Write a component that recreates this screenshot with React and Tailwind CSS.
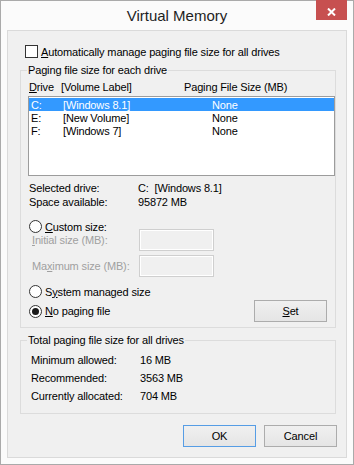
import React from 'react';

const Radio = ({ checked }) => (
  <span className="w-[13px] h-[13px] rounded-full border border-[#333333] bg-white flex items-center justify-center shrink-0">
    {checked && <span className="w-[7px] h-[7px] rounded-full bg-[#1a1a1a]" />}
  </span>
);

const Btn = ({ children, focused }) => (
  <button
    className={`w-[73px] h-[22px] border bg-linear-to-b from-[#f0f0f0] to-[#e5e5e5] flex items-center justify-center ${
      focused ? 'border-[#569de5]' : 'border-[#acacac]'
    }`}
  >
    {children}
  </button>
);

const SizeBox = () => (
  <div className="w-[75px] h-[22px] border border-[#cfcfcf]">
    <div className="w-full h-full border border-white bg-[#f0f0f0]" />
  </div>
);

const drives = [
  { letter: 'C:', label: '[Windows 8.1]', size: 'None', selected: true },
  { letter: 'E:', label: '[New Volume]', size: 'None' },
  { letter: 'F:', label: '[Windows 7]', size: 'None' },
];

const totals = [
  ['Minimum allowed:', '16 MB'],
  ['Recommended:', '3563 MB'],
  ['Currently allocated:', '704 MB'],
];

export default function App() {
  return (
    <div className="relative w-[354px] h-[465px] border border-[#aaaaaa] bg-[#fbfbfb] flex flex-col font-['Liberation_Sans',Arial,sans-serif] text-[11px] leading-[14px] tracking-[-0.15px] text-black">
      <div className="h-[29px] flex items-center justify-center text-[15px] tracking-normal text-[#1e1e1e]">Virtual Memory</div>
      <button className="absolute top-[-1px] right-[6px] w-[31px] h-[20px] bg-[#c75050] flex items-center justify-center">
        <svg width="9" height="8" viewBox="0 0 9 8" className="mt-[3px]">
          <path d="M1 0.5 L8 7.5 M8 0.5 L1 7.5" stroke="white" strokeWidth="2" />
        </svg>
      </button>

      <div className="mx-[6px] h-[428px] border border-[#dadada] bg-[#f0f0f0] flex flex-col">
        {/* auto manage */}
        <div className="mt-[14px] ml-[17px] h-[13px] flex items-center gap-[3px]">
          <span className="w-[13px] h-[13px] border border-[#333333] bg-white shrink-0" />
          <span>
            <span className="underline">A</span>utomatically manage paging file size for all drives
          </span>
        </div>

        {/* per drive */}
        <fieldset className="mt-[5px] ml-[12px] w-[316px] border border-[#dcdcdc] pb-[5px]">
          <legend className="ml-[6px] px-[1px] leading-[14px]">Paging file size for each drive</legend>
          <div className="mt-[3px] h-[14px] flex items-center pl-[8px]">
            <span className="w-[32px]">
              <span className="underline">D</span>rive
            </span>
            <span className="w-[123px]">[Volume Label]</span>
            <span>Paging File Size (MB)</span>
          </div>
          <div className="mt-[2px] ml-[7px] w-[307px] h-[80px] border border-[#9c9c9c] bg-white pt-[1px]">
            {drives.map(d => (
              <div
                key={d.letter}
                className={`h-[13px] flex items-center pl-[2px] ${d.selected ? 'bg-[#3399ff] text-white' : ''}`}
              >
                <span className="w-[32px]">{d.letter}</span>
                <span className="w-[149px]">{d.label}</span>
                <span>{d.size}</span>
              </div>
            ))}
          </div>

          <div className="mt-[5px] pl-[8px] flex h-[14px] items-center">
            <span className="w-[109px]">Selected drive:</span>
            <span>C:&nbsp;&nbsp;[Windows 8.1]</span>
          </div>
          <div className="pl-[8px] flex h-[14px] items-center">
            <span className="w-[109px]">Space available:</span>
            <span>95872 MB</span>
          </div>

          <div className="mt-[11px] ml-[8px] h-[13px] flex items-center gap-[3px]">
            <Radio />
            <span>
              <span className="underline">C</span>ustom size:
            </span>
          </div>
          <div className="mt-[-4px] pl-[11px] h-[22px] flex items-center text-[#a0a0a0]">
            <span className="w-[107px]">
              <span className="underline">I</span>nitial size (MB):
            </span>
            <SizeBox />
          </div>
          <div className="mt-[4px] pl-[11px] h-[22px] flex items-center text-[#a0a0a0]">
            <span className="w-[107px]">
              Ma<span className="underline">x</span>imum size (MB):
            </span>
            <SizeBox />
          </div>

          <div className="mt-[8px] ml-[8px] h-[13px] flex items-center gap-[3px]">
            <Radio />
            <span>
              S<span className="underline">y</span>stem managed size
            </span>
          </div>
          <div className="mt-[2px] h-[22px] flex items-center justify-between pl-[8px] pr-[8px]">
            <div className="flex items-center gap-[3px]">
              <Radio checked />
              <span>
                <span className="underline">N</span>o paging file
              </span>
            </div>
            <Btn>
              <span>
                <span className="underline">S</span>et
              </span>
            </Btn>
          </div>
        </fieldset>

        {/* totals */}
        <fieldset className="mt-[5px] ml-[12px] w-[316px] border border-[#dcdcdc] pt-[4px] pb-[8px]">
          <legend className="ml-[6px] px-[1px] leading-[14px]">Total paging file size for all drives</legend>
          {totals.map(([k, v]) => (
            <div key={k} className="h-[18px] flex items-center pl-[10px]">
              <span className="w-[109px]">{k}</span>
              <span>{v}</span>
            </div>
          ))}
        </fieldset>

        <div className="mt-[11px] flex justify-end gap-[8px] pr-[9px]">
          <Btn focused>OK</Btn>
          <Btn>Cancel</Btn>
        </div>
      </div>
    </div>
  );
}
